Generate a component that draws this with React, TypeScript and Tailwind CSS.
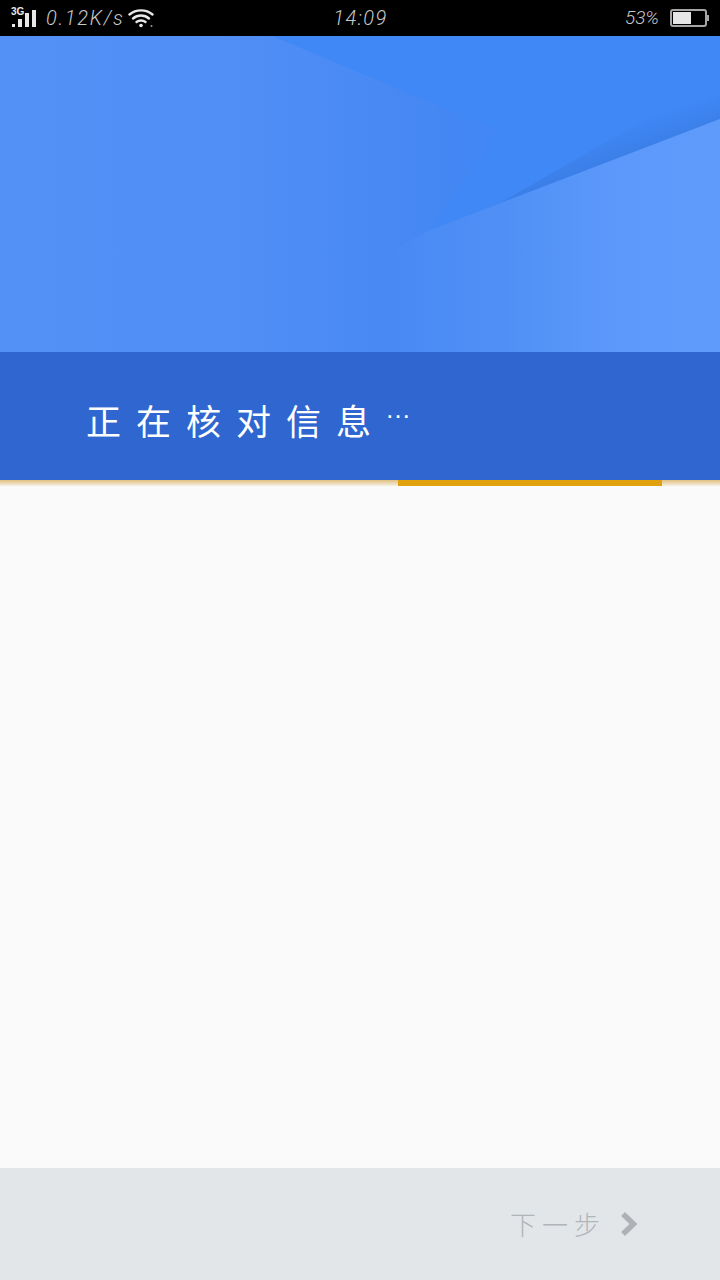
import React from 'react';

const cjk = "font-['Noto_Sans_CJK_SC','Noto_Sans_CJK_JP',sans-serif]";
const statusText = "font-['Roboto','Liberation_Sans',sans-serif] italic font-light";

function Signal() {
  return (
    <div className="relative w-[27px] h-[20px]">
      <span className="absolute left-[1px] -top-[1px] text-[10px] leading-[9px] font-bold text-[#e8e8e8] font-['Liberation_Sans',sans-serif]">3G</span>
      <div className="absolute left-[2px] bottom-[1px] flex items-end gap-[3px]">
        <div className="w-[3px] h-[3px] bg-[#e8e8e8]" />
        <div className="w-[4px] h-[8px] bg-[#e8e8e8]" />
        <div className="w-[4px] h-[14px] bg-[#e8e8e8]" />
        <div className="w-[4px] h-[17px] bg-[#e8e8e8]" />
      </div>
    </div>
  );
}

function Wifi() {
  return (
    <svg width="26" height="20" viewBox="0 0 26 20" fill="none" stroke="#e8e8e8" strokeWidth="2.4" strokeLinecap="round">
      <path d="M1.5 6.5C8 1 18 1 24.5 6.5" />
      <path d="M5 10.5C9.5 6.5 16.5 6.5 21 10.5" />
      <path d="M8.5 14C11 12 15 12 17.5 14" />
      <circle cx="13" cy="17.5" r="1.8" fill="#e8e8e8" stroke="none" />
      <circle cx="23.5" cy="18" r="1" fill="#999" stroke="none" />
    </svg>
  );
}

function Battery() {
  return (
    <div className="flex items-center">
      <div className="w-[37px] h-[18px] rounded-[3px] border-2 border-[#a6a6a6] p-[1px]">
        <div className="w-[18px] h-full bg-[#e6e6e6]" />
      </div>
      <div className="w-[2px] h-[6px] bg-[#a6a6a6]" />
    </div>
  );
}

function HeroArt() {
  return (
    <svg className="absolute inset-0 w-full h-full" viewBox="0 0 720 316" preserveAspectRatio="none">
      <defs>
        <linearGradient id="base" gradientUnits="userSpaceOnUse" x1="0" y1="0" x2="720" y2="0">
          <stop offset="0" stopColor="#5391f7" />
          <stop offset="0.35" stopColor="#508ef6" />
          <stop offset="0.6" stopColor="#4587f3" />
          <stop offset="0.7" stopColor="#4187f5" />
          <stop offset="1" stopColor="#4187f5" />
        </linearGradient>
        <linearGradient id="shade" gradientUnits="userSpaceOnUse" x1="590" y1="100" x2="600" y2="129">
          <stop offset="0" stopColor="#3a7ce4" stopOpacity="0" />
          <stop offset="1" stopColor="#3a7ce4" stopOpacity="0.8" />
        </linearGradient>
        <linearGradient id="right" gradientUnits="userSpaceOnUse" x1="390" y1="0" x2="720" y2="0">
          <stop offset="0" stopColor="#4889f4" />
          <stop offset="0.35" stopColor="#5090f6" />
          <stop offset="0.7" stopColor="#5c99fa" />
          <stop offset="1" stopColor="#5f9bfa" />
        </linearGradient>
      </defs>
      <rect width="720" height="316" fill="url(#base)" />
      <polygon points="272,0 720,0 720,83 430,194 500,95" fill="#4088f6" />
      <polygon points="720,40 720,83 500,167" fill="url(#shade)" />
      <polygon points="720,83 430,194 390,216 390,316 720,316" fill="url(#right)" />
    </svg>
  );
}

export default function App() {
  return (
    <div className="w-[720px] h-[1280px] flex flex-col bg-[#fafafa] overflow-hidden">
      <div className="h-[36px] bg-black flex items-center justify-between pl-[10px] pr-[11px] text-[#c8c8c8]">
        <div className="w-[290px] flex items-center">
          <Signal />
          <span className={`${statusText} ml-[9px] text-[20px] tracking-[1.7px] whitespace-nowrap`}>0.12K/s</span>
          <span className="ml-[3px]"><Wifi /></span>
        </div>
        <span className={`${statusText} text-[20px] tracking-[1.5px] mr-[-2px]`}>14:09</span>
        <div className="w-[290px] flex items-center justify-end">
          <span className={`${statusText} text-[19px] mr-[11px]`}>53%</span>
          <Battery />
        </div>
      </div>

      <div className="relative h-[316px]">
        <HeroArt />
      </div>

      <div className="h-[128px] bg-[#2f66d0] flex items-center pl-[86px] pt-[6px]">
        <span className={`${cjk} text-[35px] font-normal text-white tracking-[15px] leading-none whitespace-nowrap`}>正在核对信息</span>
        <span className="text-[26px] leading-none text-white font-['Liberation_Sans',sans-serif] -mt-[20px] -ml-[1px] tracking-[1px]">…</span>
      </div>

      <div className="h-[6px] bg-gradient-to-b from-[#dfc080] to-[#f7f1e4]">
        <div className="ml-[398px] w-[264px] h-full bg-[#e0a10c]" />
      </div>

      <div className="flex-1" />

      <div className="h-[112px] bg-[#e2e6e9] flex items-center justify-end pr-[82px]">
        <span className={`${cjk} text-[26px] font-light text-[#b0b5b9] tracking-[6px] leading-none whitespace-nowrap`}>下一步</span>
        <svg className="ml-[14px]" width="18" height="26" viewBox="0 0 18 26" fill="none" stroke="#aeb2b6" strokeWidth="5.5">
          <path d="M3 3L13.5 13L3 23" />
        </svg>
      </div>
    </div>
  );
}
